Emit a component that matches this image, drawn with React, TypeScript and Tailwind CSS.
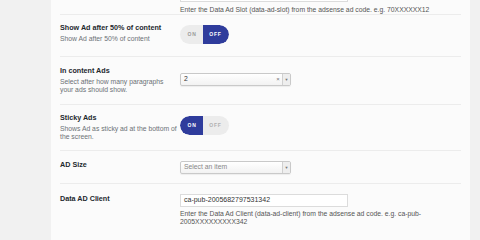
import React from "react";

const font = { fontFamily: '"Liberation Sans", Arial, sans-serif' };

function Toggle({ on }: { on: boolean }) {
  return (
    <div className="flex h-[19px] w-[49px] overflow-hidden rounded-full bg-[#ececec]">
      <div
        className={`flex w-[23px] items-center justify-center rounded-l-full pl-[1px] text-[5px] font-bold tracking-[0.8px] ${
          on ? "bg-[#2f3c9c] text-white" : "text-[#9a9a9a]"
        }`}
      >
        ON
      </div>
      <div
        className={`flex w-[26px] items-center justify-center rounded-r-full pr-[1px] text-[5px] font-bold tracking-[0.8px] ${
          !on ? "bg-[#2f3c9c] text-white" : "text-[#b0b0b0]"
        }`}
      >
        OFF
      </div>
    </div>
  );
}

function Select({ value, placeholder, clear }: { value?: string; placeholder?: string; clear?: boolean }) {
  return (
    <div className="flex h-[13px] w-[111px] items-stretch rounded-[2px] border border-[#c9c9c9] bg-gradient-to-b from-white to-[#f2f2f2] shadow-[0_1px_1px_rgba(0,0,0,0.06)]">
      <div className={`flex flex-1 items-center pl-[3px] text-[6.8px] ${value ? "text-[#333]" : "text-[#888]"}`}>
        {value ?? placeholder}
      </div>
      {clear && <div className="flex w-[8px] items-center justify-center text-[6px] text-[#777]">×</div>}
      <div className="flex w-[8px] items-center justify-center border-l border-[#d0d0d0] bg-[#eeeeee] text-[4px] text-[#777]">
        ▼
      </div>
    </div>
  );
}

function Label({ title, desc }: { title: string; desc?: React.ReactNode }) {
  return (
    <div className="w-[120px] flex-none">
      <div className="whitespace-nowrap text-[7.2px] font-bold leading-[9px] text-[#23282d]">{title}</div>
      {desc && (
        <div className="mt-[3px] whitespace-nowrap text-[6.8px] leading-[8px] text-[#6c7176]">{desc}</div>
      )}
    </div>
  );
}

export default function App() {
  return (
    <div className="flex h-[240px] w-[480px] overflow-hidden bg-[#f1f1f1]" style={font}>
      <div className="w-[51px] flex-none" />
      <div className="w-[419px] flex-none bg-[#fbfbfb] px-[9px]">
        {/* partial top row */}
        <div className="h-[24px] pl-[120px]">
          <div className="mt-[-10px] h-[12px] w-[168px] border border-[#dcdcdc] bg-white" />
          <div className="mt-[4px] whitespace-nowrap text-[6.8px] leading-[8px] text-[#555]">
            Enter the Data Ad Slot (data-ad-slot) from the adsense ad code. e.g. 70XXXXXX12
          </div>
        </div>

        <div className="flex h-[42px] border-t border-[#ececec] pt-[8px]">
          <Label title="Show Ad after 50% of content" desc="Show Ad after 50% of content" />
          <div className="mt-[2px]">
            <Toggle on={false} />
          </div>
        </div>

        <div className="flex h-[48px] border-t border-[#ececec] pt-[9px]">
          <Label
            title="In content Ads"
            desc={
              <>
                Select after how many paragraphs
                <br />
                your ads should show.
              </>
            }
          />
          <div className="mt-[7px]">
            <Select value="2" clear />
          </div>
        </div>

        <div className="flex h-[46px] border-t border-[#ececec] pt-[8px]">
          <Label
            title="Sticky Ads"
            desc={
              <>
                Shows Ad as sticky ad at the bottom of
                <br />
                the screen.
              </>
            }
          />
          <div className="mt-[3px]">
            <Toggle on={true} />
          </div>
        </div>

        <div className="flex h-[33px] border-t border-[#ececec] pt-[9px]">
          <Label title="AD Size" />
          <div className="mt-[1px]">
            <Select placeholder="Select an item" />
          </div>
        </div>

        <div className="flex border-t border-[#ececec] pt-[10px]">
          <Label title="Data AD Client" />
          <div>
            <div className="flex h-[13px] w-[168px] items-center border border-[#dcdcdc] bg-white pl-[3px] text-[7px] text-[#333]">
              ca-pub-2005682797531342
            </div>
            <div className="mt-[3px] whitespace-nowrap text-[6.8px] leading-[8.4px] text-[#555]">
              Enter the Data Ad Client (data-ad-client) from the adsense ad code. e.g. ca-pub-
              <br />
              2005XXXXXXXXX342
            </div>
          </div>
        </div>
      </div>
      <div className="flex-1" />
    </div>
  );
}
